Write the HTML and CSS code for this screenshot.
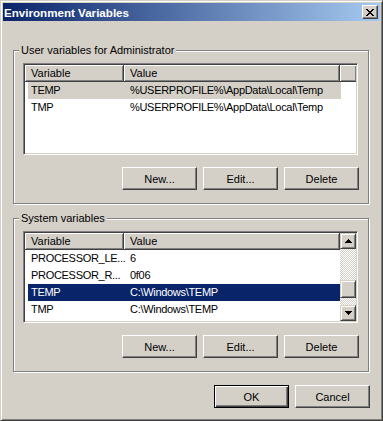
FILE: index.html
```html
<!DOCTYPE html>
<html lang="en">
<head>
  <meta charset="UTF-8">
  <title>Environment Variables</title>
  <link rel="stylesheet" href="styles.css">
</head>
<body>
  <div class="window">
    <div class="titlebar">
      <span class="title">Environment Variables</span>
      <button class="close-btn" title="Close">
        <svg width="8" height="7" viewBox="0 0 8 7" shape-rendering="crispEdges">
          <path fill="#000" d="M0 0h2v1H0z M6 0h2v1H6z M1 1h2v1H1z M5 1h2v1H5z M2 2h4v1H2z M3 3h2v1H3z M2 4h4v1H2z M1 5h2v1H1z M5 5h2v1H5z M0 6h2v1H0z M6 6h2v1H6z"/>
        </svg>
      </button>
    </div>

    <div class="content">
      <div class="group">
        <div class="group-label">User variables for Administrator</div>
        <div class="listview">
          <div class="lv-main">
            <div class="lv-header">
              <div class="hd-col col-name">Variable</div>
              <div class="hd-col col-value">Value</div>
              <div class="hd-col col-fill"></div>
            </div>
            <div class="lv-row inactive">
              <div class="cell-name">TEMP</div>
              <div class="cell-value">%USERPROFILE%\AppData\Local\Temp</div>
            </div>
            <div class="lv-row">
              <div class="cell-name">TMP</div>
              <div class="cell-value">%USERPROFILE%\AppData\Local\Temp</div>
            </div>
          </div>
        </div>
        <div class="btn-row">
          <button class="btn">New...</button>
          <button class="btn">Edit...</button>
          <button class="btn">Delete</button>
        </div>
      </div>

      <div class="group group-system">
        <div class="group-label">System variables</div>
        <div class="listview">
          <div class="lv-main">
            <div class="lv-header">
              <div class="hd-col col-name">Variable</div>
              <div class="hd-col col-value">Value</div>
              <div class="hd-col col-fill"></div>
            </div>
            <div class="lv-row">
              <div class="cell-name">PROCESSOR_LE...</div>
              <div class="cell-value">6</div>
            </div>
            <div class="lv-row">
              <div class="cell-name">PROCESSOR_R...</div>
              <div class="cell-value">0f06</div>
            </div>
            <div class="lv-row selected">
              <div class="cell-name">TEMP</div>
              <div class="cell-value">C:\Windows\TEMP</div>
            </div>
            <div class="lv-row">
              <div class="cell-name">TMP</div>
              <div class="cell-value">C:\Windows\TEMP</div>
            </div>
          </div>
          <div class="scrollbar">
            <div class="sb-btn">
              <svg width="7" height="4" viewBox="0 0 7 4" shape-rendering="crispEdges">
                <path fill="#000" d="M3 0h1v1H3z M2 1h3v1H2z M1 2h5v1H1z M0 3h7v1H0z"/>
              </svg>
            </div>
            <div class="sb-track">
              <div class="sb-thumb"></div>
            </div>
            <div class="sb-btn">
              <svg width="7" height="4" viewBox="0 0 7 4" shape-rendering="crispEdges">
                <path fill="#000" d="M0 0h7v1H0z M1 1h5v1H1z M2 2h3v1H2z M3 3h1v1H3z"/>
              </svg>
            </div>
          </div>
        </div>
        <div class="btn-row">
          <button class="btn">New...</button>
          <button class="btn">Edit...</button>
          <button class="btn">Delete</button>
        </div>
      </div>

      <div class="dialog-buttons">
        <button class="btn btn-default">OK</button>
        <button class="btn">Cancel</button>
      </div>
    </div>
  </div>
</body>
</html>
```

FILE: styles.css
```css
body {
  margin: 0;
  background-color: #d4d0c8;
  font-family: 'Liberation Sans', Arial, sans-serif;
  font-size: 11px;
  color: #000;
}

.window {
  width: 383px;
  height: 421px;
  box-sizing: border-box;
  padding: 2px;
  background-color: #d4d0c8;
  border: 1px solid;
  border-color: #d4d0c8 #404040 #404040 #d4d0c8;
  box-shadow: inset 1px 1px #fff, inset -1px -1px #808080;
}

.titlebar {
  height: 18px;
  display: flex;
  align-items: center;
  justify-content: space-between;
  padding: 0 2px 0 1px;
  background: linear-gradient(to right, #0a246a, #a6caf0);
}

.title {
  color: #fff;
  font-weight: bold;
  font-size: 11.6px;
}

.close-btn {
  width: 16px;
  height: 14px;
  padding: 0;
  display: flex;
  align-items: center;
  justify-content: center;
  background-color: #d4d0c8;
  border: 1px solid;
  border-color: #fff #404040 #404040 #fff;
  box-shadow: inset -1px -1px #808080;
}

.content {
  padding: 29px 10px 0 10px;
}

/* group boxes */
.group {
  width: 356px;
  box-sizing: border-box;
  display: flex;
  flex-direction: column;
  padding: 0 10px 13px 9px;
  border: 1px solid #808080;
  box-shadow: inset 1px 1px #fff, 1px 1px #fff;
}

.group-system {
  margin-top: 14px;
}

.group-label {
  align-self: flex-start;
  margin: -7px 0 0 -4px;
  padding: 0 2px;
  line-height: 13px;
  background-color: #d4d0c8;
}

/* list views */
.listview {
  margin-top: 6px;
  width: 335px;
  height: 92px;
  box-sizing: border-box;
  display: flex;
  padding: 1px;
  background-color: #fff;
  border: 1px solid;
  border-color: #808080 #fff #fff #808080;
  box-shadow: inset 1px 1px #404040, inset -1px -1px #d4d0c8;
}

.lv-main {
  flex: 1;
  min-width: 0;
}

.lv-header {
  display: flex;
  height: 17px;
}

.hd-col {
  box-sizing: border-box;
  height: 17px;
  line-height: 16px;
  padding-left: 6px;
  background-color: #d4d0c8;
  border-right: 1px solid #404040;
  border-bottom: 1px solid #404040;
  box-shadow: inset 1px 1px #fff, inset -1px -1px #808080;
  white-space: nowrap;
}

.col-name {
  width: 99px;
}

.col-value {
  width: 216px;
}

.col-fill {
  flex: 1;
  padding: 0;
  border-right: none;
}

.lv-row {
  display: flex;
  height: 17px;
  line-height: 17px;
  margin-left: 3px;
  width: 313px;
  white-space: nowrap;
  letter-spacing: -0.3px;
}

.lv-row.inactive {
  background-color: #d4d0c8;
}

.lv-row.selected {
  background-color: #0a246a;
  color: #fff;
}

.cell-name {
  width: 96px;
  flex-shrink: 0;
  box-sizing: border-box;
  padding-left: 3px;
}

.cell-value {
  flex: 1;
  padding-left: 6px;
  overflow: hidden;
}

/* scrollbar */
.scrollbar {
  width: 16px;
  display: flex;
  flex-direction: column;
}

.sb-btn,
.sb-thumb {
  box-sizing: border-box;
  width: 16px;
  height: 16px;
  background-color: #d4d0c8;
  border: 1px solid;
  border-color: #d4d0c8 #404040 #404040 #d4d0c8;
  box-shadow: inset 1px 1px #fff, inset -1px -1px #808080;
}

.sb-btn {
  display: flex;
  align-items: center;
  justify-content: center;
}

.sb-track {
  flex: 1;
  background: repeating-conic-gradient(#fff 0 25%, #d4d0c8 0 50%) 0 0 / 2px 2px;
}

.sb-thumb {
  height: 18px;
  margin-top: 31px;
}

/* buttons */
.btn-row {
  display: flex;
  justify-content: flex-end;
  gap: 6px;
  margin-top: 12px;
  margin-right: -1px;
}

.dialog-buttons {
  display: flex;
  justify-content: flex-end;
  gap: 6px;
  margin-top: 13px;
}

.btn {
  width: 75px;
  height: 23px;
  padding: 0;
  font-family: inherit;
  font-size: 11px;
  color: #000;
  background-color: #d4d0c8;
  border: 1px solid;
  border-color: #fff #404040 #404040 #fff;
  box-shadow: inset -1px -1px #808080;
}

.btn-default {
  border-color: #000;
  box-shadow: inset 1px 1px #fff, inset -1px -1px #404040, inset -2px -2px #808080;
}
```
